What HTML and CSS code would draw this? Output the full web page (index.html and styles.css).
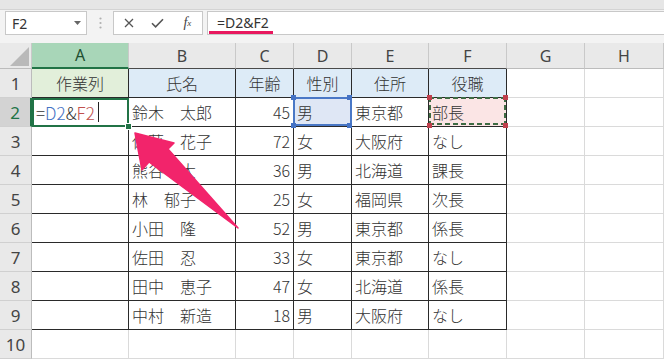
FILE: index.html
```html
<!DOCTYPE html>
<html lang="ja">
<head>
    <meta charset="UTF-8">
    <meta name="viewport" content="width=device-width, initial-scale=1.0">
    <title>作業列の数式</title>
    <link rel="stylesheet" href="styles.css">
</head>
<body>
    <div class="ribbon-edge"></div>

    <!-- Formula bar -->
    <div class="formula-bar">
        <div class="name-box">
            <span>F2</span>
            <svg width="7" height="4" viewBox="0 0 7 4"><path d="M0 0h7L3.5 4z" fill="#666"/></svg>
        </div>
        <div class="grip">
            <svg width="3" height="12" viewBox="0 0 3 12">
                <circle cx="1.5" cy="1.5" r="1.1" fill="#b0b0b0"/>
                <circle cx="1.5" cy="6" r="1.1" fill="#b0b0b0"/>
                <circle cx="1.5" cy="10.5" r="1.1" fill="#b0b0b0"/>
            </svg>
        </div>
        <div class="fx-buttons">
            <span class="btn">
                <svg width="10" height="10" viewBox="0 0 10 10"><path d="M1 1l8 8M9 1l-8 8" stroke="#555" stroke-width="1.3"/></svg>
            </span>
            <span class="btn">
                <svg width="13" height="10" viewBox="0 0 13 10"><path d="M1 5.2l3.6 3.6L12 1.2" stroke="#555" stroke-width="1.6" fill="none"/></svg>
            </span>
            <span class="btn fx"><i>f</i><sub>x</sub></span>
        </div>
        <div class="formula-input">
            <span class="formula-text">=D2&amp;F2</span>
        </div>
    </div>

    <!-- Sheet -->
    <div class="sheet">
        <div class="c ch corner"></div>
        <div class="c ch sel">A</div>
        <div class="c ch top">B</div>
        <div class="c ch top">C</div>
        <div class="c ch top">D</div>
        <div class="c ch top">E</div>
        <div class="c ch top">F</div>
        <div class="c ch">G</div>
        <div class="c ch">H</div>

        <div class="c rh">1</div>
        <div class="c t head green">作業列</div>
        <div class="c t head blue">氏名</div>
        <div class="c t head blue">年齢</div>
        <div class="c t head blue">性別</div>
        <div class="c t head blue">住所</div>
        <div class="c t head blue">役職</div>
        <div class="c"></div>
        <div class="c"></div>

        <div class="c rh sel">2</div>
        <div class="c t active"><span>=</span><span class="ref-blue">D2</span><span>&amp;</span><span class="ref-red">F2</span><span class="caret"></span></div>
        <div class="c t">鈴木　太郎</div>
        <div class="c t num">45</div>
        <div class="c t ref-d">男</div>
        <div class="c t">東京都</div>
        <div class="c t ref-f">部長</div>
        <div class="c"></div>
        <div class="c"></div>

        <div class="c rh">3</div>
        <div class="c t"></div>
        <div class="c t">佐藤　花子</div>
        <div class="c t num">72</div>
        <div class="c t">女</div>
        <div class="c t">大阪府</div>
        <div class="c t">なし</div>
        <div class="c"></div>
        <div class="c"></div>

        <div class="c rh">4</div>
        <div class="c t"></div>
        <div class="c t">熊谷　大</div>
        <div class="c t num">36</div>
        <div class="c t">男</div>
        <div class="c t">北海道</div>
        <div class="c t">課長</div>
        <div class="c"></div>
        <div class="c"></div>

        <div class="c rh">5</div>
        <div class="c t"></div>
        <div class="c t">林　郁子</div>
        <div class="c t num">25</div>
        <div class="c t">女</div>
        <div class="c t">福岡県</div>
        <div class="c t">次長</div>
        <div class="c"></div>
        <div class="c"></div>

        <div class="c rh">6</div>
        <div class="c t"></div>
        <div class="c t">小田　隆</div>
        <div class="c t num">52</div>
        <div class="c t">男</div>
        <div class="c t">東京都</div>
        <div class="c t">係長</div>
        <div class="c"></div>
        <div class="c"></div>

        <div class="c rh">7</div>
        <div class="c t"></div>
        <div class="c t">佐田　忍</div>
        <div class="c t num">33</div>
        <div class="c t">女</div>
        <div class="c t">東京都</div>
        <div class="c t">なし</div>
        <div class="c"></div>
        <div class="c"></div>

        <div class="c rh">8</div>
        <div class="c t"></div>
        <div class="c t">田中　恵子</div>
        <div class="c t num">47</div>
        <div class="c t">女</div>
        <div class="c t">北海道</div>
        <div class="c t">係長</div>
        <div class="c"></div>
        <div class="c"></div>

        <div class="c rh">9</div>
        <div class="c t"></div>
        <div class="c t">中村　新造</div>
        <div class="c t num">18</div>
        <div class="c t">男</div>
        <div class="c t">大阪府</div>
        <div class="c t">なし</div>
        <div class="c"></div>
        <div class="c"></div>

        <div class="c rh">10</div>
        <div class="c"></div>
        <div class="c"></div>
        <div class="c"></div>
        <div class="c"></div>
        <div class="c"></div>
        <div class="c"></div>
        <div class="c"></div>
        <div class="c"></div>
    </div>

    <!-- Annotation arrow -->
    <svg class="arrow" width="664" height="359" viewBox="0 0 664 359">
        <polygon points="135,133 174,143 168,149 238,228 149,162 142,170" fill="#f2246b" stroke="#f2246b" stroke-width="1.5" stroke-linejoin="round"/>
    </svg>
</body>
</html>
```

FILE: styles.css
```css
body {
    margin: 0;
    width: 664px;
    height: 359px;
    overflow: hidden;
    position: relative;
    background: #fff;
    font-family: "Noto Sans CJK JP", "Noto Sans", sans-serif;
    color: #333;
}

.ribbon-edge {
    height: 9px;
    background: #e6e6e6;
    border-bottom: 1px solid #d4d4d4;
}

/* Formula bar */
.formula-bar {
    display: flex;
    align-items: flex-start;
    height: 33px;
    padding-top: 1px;
    box-sizing: border-box;
    background: #f3f3f3;
}

.name-box {
    margin-left: 5px;
    width: 82px;
    height: 24px;
    box-sizing: border-box;
    border: 1px solid #c8c8c8;
    background: #fff;
    display: flex;
    align-items: center;
    justify-content: space-between;
    padding: 0 5px 0 6px;
    font-family: "Noto Sans", sans-serif;
    font-size: 14px;
    color: #333;
}

.grip {
    width: 26px;
    height: 24px;
    display: flex;
    align-items: center;
    justify-content: center;
}

.fx-buttons {
    width: 90px;
    height: 24px;
    box-sizing: border-box;
    border: 1px solid #c8c8c8;
    background: #fff;
    display: flex;
    align-items: center;
}

.btn {
    width: 30px;
    display: flex;
    justify-content: center;
    align-items: center;
}

.fx {
    font-family: "Liberation Serif", serif;
    font-size: 14px;
    color: #444;
}

.fx sub {
    font-size: 9px;
    font-style: italic;
}

.formula-input {
    flex: 1;
    margin-left: 4px;
    height: 24px;
    box-sizing: border-box;
    border: 1px solid #c8c8c8;
    border-right: none;
    background: #fff;
    padding-left: 9px;
    display: flex;
    align-items: center;
}

.formula-text {
    position: relative;
    font-family: "Noto Sans", sans-serif;
    font-size: 14px;
    line-height: 20px;
    color: #333;
}

.formula-text::after {
    content: "";
    position: absolute;
    left: -8px;
    right: -4px;
    bottom: -1px;
    height: 3px;
    background: #e8185e;
}

/* Sheet grid */
.sheet {
    display: grid;
    grid-template-columns: 32px 97px 107px 58px 58px 77px 78px 78px 79px;
    grid-template-rows: 26px repeat(10, 29px);
}

.c {
    position: relative;
    box-sizing: border-box;
    border-right: 1px solid #dadada;
    border-bottom: 1px solid #dadada;
    display: flex;
    align-items: center;
    padding: 0 3px;
    font-size: 16px;
    font-weight: 300;
    white-space: pre;
    color: #333;
}

.ch {
    background: #e9e9e9;
    justify-content: center;
    border-right-color: #c9c9c9;
    border-bottom-color: #bcbcbc;
    font-family: "Noto Sans", sans-serif;
    font-size: 16px;
    font-weight: 400;
    color: #444;
}

.ch.top {
    border-bottom-color: #4a4a4a;
}

.ch.sel {
    background: #a8d6b8;
    border-bottom: 2px solid #217346;
    color: #1f4f30;
}

.corner::after {
    content: "";
    position: absolute;
    right: 2px;
    bottom: 2px;
    border-left: 19px solid transparent;
    border-bottom: 19px solid #b9b9b9;
}

.rh {
    background: #e9e9e9;
    justify-content: center;
    border-right-color: #bcbcbc;
    border-bottom-color: #d0d0d0;
    font-family: "Noto Sans", sans-serif;
    font-size: 17px;
    font-weight: 400;
    color: #444;
}

.rh.sel {
    background: #d3d3d3;
    color: #217346;
    border-right: 2px solid #217346;
}

.t {
    border-right-color: #2a2a2a;
    border-bottom-color: #2a2a2a;
}

.head {
    justify-content: center;
}

.green {
    background: #e2efda;
}

.blue {
    background: #ddebf7;
}

.num {
    justify-content: flex-end;
}

/* Active cell being edited */
.active {
    padding-left: 4px;
    font-size: 17px;
}

.active::before {
    content: "";
    position: absolute;
    top: 0;
    left: 0;
    right: -1px;
    bottom: -1px;
    border: 2px solid #217346;
    z-index: 2;
}

.active::after {
    content: "";
    position: absolute;
    right: -4px;
    bottom: -4px;
    width: 5px;
    height: 5px;
    background: #217346;
    border: 1px solid #fff;
    z-index: 3;
}

.ref-blue {
    color: #4472c4;
}

.ref-red {
    color: #c0504d;
}

.caret {
    width: 1px;
    height: 20px;
    margin-left: 3px;
    background: #222;
}

/* Referenced cells */
.ref-d {
    background: #dfe7f5;
}

.ref-d::before {
    content: "";
    position: absolute;
    top: -1px;
    left: -1px;
    right: -1px;
    bottom: 0;
    border: 2px solid #4a78c6;
    z-index: 2;
}

.ref-d::after {
    content: "";
    position: absolute;
    top: -3px;
    left: -3px;
    width: 5px;
    height: 5px;
    background: #4472c4;
    box-shadow: 56px 0 #4472c4, 0 28px #4472c4, 56px 28px #4472c4;
    z-index: 3;
}

.ref-f {
    background: #fbe5e5;
}

.ref-f::before {
    content: "";
    position: absolute;
    top: -1px;
    left: 0;
    right: 0;
    bottom: 1px;
    background:
        repeating-linear-gradient(90deg, #3e6b43 0 5px, transparent 5px 8px) left top / 100% 2px no-repeat,
        repeating-linear-gradient(90deg, #3e6b43 0 5px, transparent 5px 8px) left bottom / 100% 2px no-repeat,
        repeating-linear-gradient(180deg, #3e6b43 0 5px, transparent 5px 8px) left top / 2px 100% no-repeat,
        repeating-linear-gradient(180deg, #3e6b43 0 5px, transparent 5px 8px) right top / 2px 100% no-repeat;
    z-index: 2;
}

.ref-f::after {
    content: "";
    position: absolute;
    top: -3px;
    left: -2px;
    width: 5px;
    height: 5px;
    background: #c0404d;
    box-shadow: 76px 0 #c0404d, 0 28px #c0404d, 76px 28px #c0404d;
    z-index: 3;
}

.arrow {
    position: absolute;
    top: 0;
    left: 0;
    z-index: 10;
    pointer-events: none;
}
```
